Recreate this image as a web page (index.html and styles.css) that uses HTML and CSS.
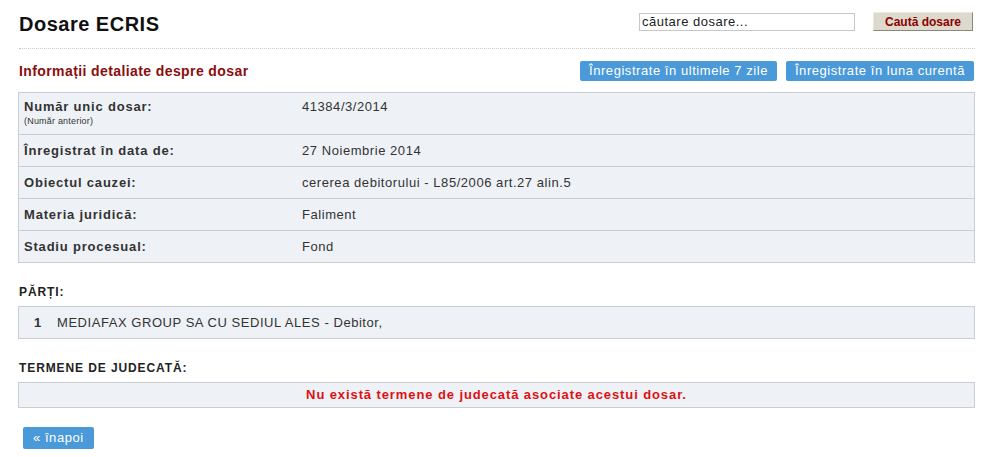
FILE: index.html
```html
<!DOCTYPE html>
<html>
	<head>
		<meta charset="utf-8">
		<title>Dosare ECRIS</title>
		<link rel="stylesheet" href="styles.css">
	</head>
	<body>
		<div class="pagina">
			<div class="antet">
				<h1 class="titlu">Dosare ECRIS</h1>
				<form class="cautare">
					<input type="text" class="cautare_text" value="căutare dosare...">
					<button type="button" class="cautare_buton">Caută dosare</button>
				</form>
			</div>

			<div class="subantet">
				<h2 class="subtitlu">Informații detaliate despre dosar</h2>
				<div class="filtre">
					<a href="#" class="buton_albastru">Înregistrate în ultimele 7 zile</a>
					<a href="#" class="buton_albastru">Înregistrate în luna curentă</a>
				</div>
			</div>

			<table class="detalii">
				<tr class="rand_mare">
					<td class="eticheta">Număr unic dosar:<small>(Număr anterior)</small></td>
					<td class="valoare">41384/3/2014</td>
				</tr>
				<tr>
					<td class="eticheta">Înregistrat în data de:</td>
					<td class="valoare">27 Noiembrie 2014</td>
				</tr>
				<tr>
					<td class="eticheta">Obiectul cauzei:</td>
					<td class="valoare">cererea debitorului - L85/2006 art.27 alin.5</td>
				</tr>
				<tr>
					<td class="eticheta">Materia juridică:</td>
					<td class="valoare">Faliment</td>
				</tr>
				<tr>
					<td class="eticheta">Stadiu procesual:</td>
					<td class="valoare">Fond</td>
				</tr>
			</table>

			<h3 class="sectiune">PĂRȚI:</h3>
			<div class="cutie parti">
				<span class="nr">1</span>
				<span>MEDIAFAX GROUP SA CU SEDIUL ALES - Debitor,</span>
			</div>

			<h3 class="sectiune">TERMENE DE JUDECATĂ:</h3>
			<div class="cutie termene">Nu există termene de judecată asociate acestui dosar.</div>

			<a href="#" class="buton_albastru inapoi">« înapoi</a>
		</div>
	</body>
</html>
```

FILE: styles.css
```css
body {
	margin: 0;
	background: #fff;
	font-family: "Liberation Sans", Arial, sans-serif;
	color: #333;
	letter-spacing: 0.55px;
}

.pagina {
	width: 957px;
	padding: 0 0 0 18px;
}

.antet {
	display: flex;
	justify-content: space-between;
	align-items: center;
	height: 48px;
	border-bottom: 1px dotted #c8c8c8;
	margin-left: 1px;
}

.titlu {
	margin: 0;
	padding-top: 1px;
	font-size: 20px;
	font-weight: bold;
	color: #111;
	letter-spacing: 0.5px;
}

.cautare {
	display: flex;
	align-items: center;
	margin-top: -5px;
	margin-right: 2px;
}

.cautare_text {
	width: 210px;
	height: 14px;
	padding: 1px 2px;
	border: 1px solid #c7c7c7;
	font: 13px "Liberation Sans", Arial, sans-serif;
	letter-spacing: 0.5px;
	color: #222;
	margin-right: 18px;
}

.cautare_buton {
	width: 100px;
	height: 19px;
	padding: 0;
	background: #ddd9cc;
	border: 1px solid #ece9e0;
	border-right-color: #8a877c;
	border-bottom-color: #8a877c;
	color: #8b0000;
	font: bold 12px "Liberation Sans", Arial, sans-serif;
}

.subantet {
	display: flex;
	justify-content: space-between;
	align-items: center;
	margin: 11px 1px 0 1px;
	height: 21px;
}

.subtitlu {
	margin: 0;
	font-size: 14px;
	font-weight: bold;
	color: #8b0d0d;
	letter-spacing: 0.4px;
}

.filtre {
	display: flex;
	gap: 9px;
}

.buton_albastru {
	display: inline-block;
	height: 20px;
	line-height: 20px;
	padding: 0 9px;
	background: #4a99d9;
	color: #fff;
	font-size: 13px;
	text-decoration: none;
	border-radius: 2px;
}

.detalii {
	width: 957px;
	margin-top: 11px;
	border-collapse: collapse;
	background: #eef2f6;
	border: 1px solid #c9ced3;
}

.detalii td {
	height: 31px;
	border-bottom: 1px solid #c9ced3;
	font-size: 13px;
	padding: 0 5px;
}

.detalii .rand_mare td {
	height: 35px;
	vertical-align: top;
	padding-top: 6px;
}

.eticheta {
	width: 268px;
	font-weight: bold;
	color: #333;
	letter-spacing: 0.8px;
}

.eticheta small {
	display: block;
	font-size: 9px;
	font-weight: normal;
	letter-spacing: 0.2px;
	margin-top: 2px;
}

.valoare {
	color: #333;
}

.sectiune {
	margin: 22px 0 0 1px;
	height: 21px;
	font-size: 12px;
	font-weight: bold;
	color: #222;
	letter-spacing: 0.9px;
}

.cutie {
	background: #eef2f6;
	border: 1px solid #c9ced3;
	font-size: 13px;
}

.parti {
	display: flex;
	align-items: center;
	height: 31px;
	padding-left: 15px;
}

.parti .nr {
	font-weight: bold;
	width: 23px;
}

.termene {
	height: 24px;
	line-height: 24px;
	text-align: center;
	color: #dd1111;
	font-weight: bold;
	letter-spacing: 0.9px;
}

.inapoi {
	margin: 19px 0 0 5px;
	height: 22px;
	line-height: 22px;
	padding: 0 10px;
}
```
